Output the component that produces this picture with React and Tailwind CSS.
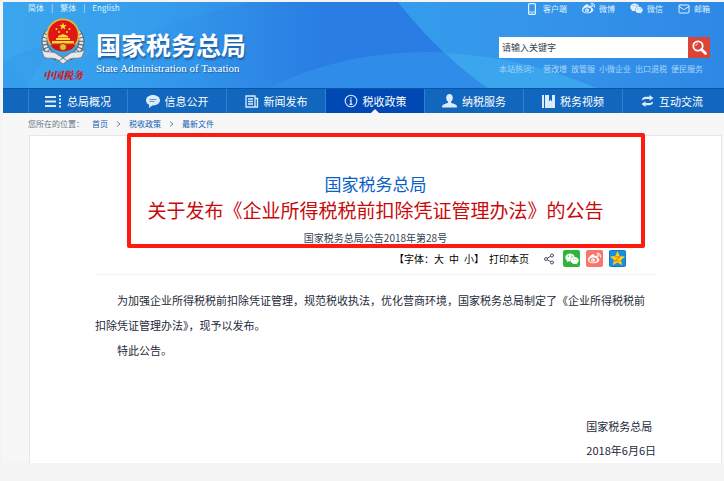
import React from 'react';
import { FaWeixin, FaWeibo } from 'react-icons/fa';
import { Share2, Mail } from 'lucide-react';

const MenuIcon = () => (
  <svg width="17" height="13" viewBox="0 0 17 13" fill="currentColor" aria-hidden="true">
    <path d="M0 1h11v2H0zM0 5.500h11v2H0zM0 10h11v2H0z" />
    <path d="M14 0h2v2h-2zM14 3.500h2v2h-2zM14 7h2v2h-2zM14 10.500h2v2h-2z" />
  </svg>
);

const ChatIcon = () => (
  <svg width="14" height="13" viewBox="0 0 14 13" aria-hidden="true">
    <path d="M7 0C3 0 0 2.300 0 5.300c0 2 1.200 3.600 3.200 4.500L3 13l3.400-2.500H7c4 0 7-2.300 7-5.200S11 0 7 0z" fill="currentColor" />
    <path d="M3.500 4.500h7M3.500 6.500h5" stroke="#5b97d3" />
  </svg>
);

const NewsIcon = () => (
  <svg width="14" height="13" viewBox="0 0 14 13" fill="none" stroke="currentColor" strokeWidth="1.300" aria-hidden="true">
    <path d="M1 1h9v11H1zM10 3.500h2.500V12H10" />
    <path d="M3 4h5M3 6.500h5M3 9h5" />
  </svg>
);

const InfoIcon = () => (
  <svg width="14" height="14" viewBox="0 0 14 14" fill="none" stroke="currentColor" aria-hidden="true">
    <circle cx="7" cy="7" r="5.800" strokeWidth="1.100" />
    <path d="M7 3.200v1.600M5.800 6.200H7v4M5.500 10.300h3" strokeWidth="1.300" />
  </svg>
);

const PersonIcon = () => (
  <svg width="15" height="14" viewBox="0 0 15 14" fill="currentColor" aria-hidden="true">
    <path d="M7.500 0C5.500 0 4.200 1.500 4.200 3.700c0 1.800.8 3.300 1.800 4.100v1L1.500 10.600C.5 11.100 0 12 0 13.500h15c0-1.500-.5-2.400-1.500-2.900L9 8.800v-1c1-.8 1.800-2.300 1.800-4.100C10.800 1.500 9.500 0 7.500 0z" />
  </svg>
);

const BookIcon = () => (
  <svg width="13" height="13" viewBox="0 0 13 13" fill="currentColor" aria-hidden="true">
    <path d="M0 0h2v13H0zM3 0h4v6.500l1.500-1.700L10 6.500V0h3v13H3z" />
  </svg>
);

const SwapIcon = () => (
  <svg width="13" height="12" viewBox="0 0 13 12" fill="currentColor" aria-hidden="true">
    <path d="M.8 5.500C.8 3 2.500 1.800 5 1.800h3.500V0L12.500 3 8.500 5.800V4H5.200C3.500 4 2.800 4.500.8 5.500z" />
    <path d="M12.200 6.500c0 2.500-1.700 3.700-4.200 3.700H4.500V12L.5 9l4-2.800V8h3.300c1.700 0 2.400-.5 4.400-1.500z" />
  </svg>
);

const PhoneIcon = () => (
  <svg width="8" height="12" viewBox="0 0 8 12" fill="none" stroke="currentColor" className="mr-[3px]" aria-hidden="true">
    <rect x=".6" y=".6" width="6.800" height="10.800" rx="1" strokeWidth="1.200" />
    <path d="M1 9h6M3.300 10.300h1.400" strokeWidth=".8" />
  </svg>
);

const SearchIcon = () => (
  <svg width="15" height="15" viewBox="0 0 15 15" fill="none" stroke="currentColor" aria-hidden="true">
    <circle cx="6" cy="6" r="4.700" strokeWidth="1.800" />
    <path d="M9.500 9.500l4 4" strokeWidth="2.800" strokeLinecap="round" />
    <path d="M3.800 5.800c.1-1.200 1-2 2.200-2.100" strokeWidth=".9" />
  </svg>
);

const StarIcon = () => (
  <svg width="17" height="17" viewBox="0 0 17 17" aria-hidden="true">
    <rect x=".5" y=".5" width="16" height="16" rx="1" fill="#1890e0" stroke="#1678c0" />
    <path d="M8.500 1l2.200 4.900 5.300.5-4 3.500 1.200 5.400-4.700-2.800-4.700 2.800L5 9.900 1 6.400l5.300-.5z" fill="#ffce1b" />
    <path d="M5.500 6.700h5.300L6 11h5.600" fill="none" stroke="#e18a06" strokeWidth="1.100" />
  </svg>
);

const Emblem = () => (
  <svg width="46" height="47" viewBox="0 0 46 47" className="block" aria-hidden="true">
    <g fill="none" stroke="#59636b" strokeWidth="6">
      <path d="M8 14C1 23 5 34 17 40M38 14c7 9 3 20-9 26" />
    </g>
    <g fill="none" stroke="#dfe4e6" strokeWidth="4" strokeDasharray="2.500 1">
      <path d="M8 14C1 23 5 34 17 40M38 14c7 9 3 20-9 26" />
    </g>
    <circle cx="23" cy="17" r="16.500" fill="#e6b93c" />
    <circle cx="23" cy="17" r="14.800" fill="#e01814" />
    <path d="M23 4.500l1 2.600h2.800l-2.200 1.700.8 2.700-2.400-1.600-2.400 1.600.8-2.700-2.200-1.700H22z" fill="#ffd83a" />
    <g fill="#ffd83a">
      <circle cx="16.500" cy="11" r="1" />
      <circle cx="29.500" cy="11" r="1" />
      <circle cx="19" cy="14" r="1" />
      <circle cx="27" cy="14" r="1" />
      <path d="M18 18l5-2 5 2v1.500H18zM16 20h14v2H16zM12 23h22v2.500H12z" />
    </g>
    <path d="M10 26.500c7 2.500 19 2.500 26 0-3 5-8 7-13 7s-10-2-13-7z" fill="#c51912" />
    <circle cx="23" cy="29" r="3.500" fill="#e9bd3c" stroke="#a8350f" />
    <path d="M1 31c4 5 11 1 16 5l6 3 6-3c5-4 12 0 16-5l-3 8c-5 3-10-1-15 4l-4 3-4-3c-5-5-10-1-15-4z" fill="#e5e8ea" stroke="#69737a" strokeWidth=".8" />
    <path d="M17 36l12 8M29 36l-12 8" stroke="#737c82" strokeWidth="1" />
  </svg>
);

const languages = ['简体', '繁体', 'English'];

const channels = [
  { label: '客户端', icon: <PhoneIcon /> },
  { label: '微博', icon: <FaWeibo size={13} /> },
  { label: '微信', icon: <FaWeixin size={13} /> },
  { label: '邮箱', icon: <Mail size={12} /> },
];

const hotWords = ['营改增', '放管服', '小微企业', '出口退税', '便民服务'];

const navItems = [
  { label: '总局概况', icon: <MenuIcon /> },
  { label: '信息公开', icon: <ChatIcon /> },
  { label: '新闻发布', icon: <NewsIcon /> },
  { label: '税收政策', icon: <InfoIcon />, active: true },
  { label: '纳税服务', icon: <PersonIcon /> },
  { label: '税务视频', icon: <BookIcon /> },
  { label: '互动交流', icon: <SwapIcon /> },
];

const crumbs = ['首页', '税收政策', '最新文件'];

const HeaderBackdrop = () => (
  <svg className="absolute inset-0 h-full w-full" viewBox="0 0 721 86" preserveAspectRatio="none" aria-hidden="true">
    <defs>
      <linearGradient id="sky" x1="0" y1="0" x2="1" y2="0">
        <stop offset="0" stopColor="#3aa5ee" />
        <stop offset=".2" stopColor="#349bec" />
        <stop offset=".45" stopColor="#297de3" />
        <stop offset="1" stopColor="#297de3" />
      </linearGradient>
      <linearGradient id="wing" x1="0" y1="0" x2="1" y2="0">
        <stop offset="0" stopColor="#349cec" />
        <stop offset=".4" stopColor="#3595ea" />
        <stop offset="1" stopColor="#2e88e6" />
      </linearGradient>
    </defs>
    <path d="M0 0h721v86H0z" fill="url(#sky)" />
    <path d="M0 86V59C16 51 36 44 60 41 42 55 30 70 24 86z" fill="#2e93e8" opacity=".35" />
    <path d="M26 86C70 56 145 24 250 0H0v60z" fill="#44aff2" opacity=".15" />
    <path d="M264 86c60-28 110-36 165-36 55 0 110 10 165 36z" fill="#2f8de9" />
    <path d="M395 0c22 28 48 56 89 86h237V0z" fill="url(#wing)" />
    <path d="M443 51c45 2 100 13 150 35H485c-16-11-30-22-42-35z" fill="#3ba5ed" />
  </svg>
);

const Header = () => (
  <header className="relative">
    <HeaderBackdrop />
    <div className="relative flex justify-between pr-[14px] pl-[25px] text-[8px] leading-3 text-sky-100">
      <div className="pb-[5px]">
        <div className="flex gap-[7px]">
          {languages.map((name, i) => (
            <React.Fragment key={name}>
              {i > 0 && <span>|</span>}
              <a href="#">{name}</a>
            </React.Fragment>
          ))}
        </div>
        <div className="mt-1 flex gap-[10px] pl-3">
          <div className="flex flex-col items-center gap-[2px]">
            <Emblem />
            <span className="font-['Noto_Serif_CJK_SC','Noto_Sans_CJK_SC',serif] text-[10px] leading-4 font-black text-[#d3141b] italic">中国税务</span>
          </div>
          <div className="pt-2">
            <h1 className="text-[25px] leading-9 font-bold text-white [text-shadow:1px_2px_2px_#1b5d9f]">国家税务总局</h1>
            <p className="font-['Liberation_Serif',serif] text-[11px] leading-3 text-white [text-shadow:1px_1px_1px_#1b5d9f]">State Administration of Taxation</p>
          </div>
        </div>
      </div>

      <div className="w-[211px]">
        <div className="flex justify-end gap-[15px]">
          {channels.map((c) => (
            <a key={c.label} href="#" className="flex items-center gap-1">
              {c.icon}
              {c.label}
            </a>
          ))}
        </div>
        <form className="mt-[22px] flex h-[21px]">
          <input type="text" aria-label="请输入关键字" placeholder="请输入关键字" className="min-w-0 flex-1 bg-white px-[3px] text-[9px] text-gray-800 placeholder:text-gray-700" />
          <button type="button" aria-label="搜索" className="flex w-[22px] items-center justify-center bg-[#dc4438] text-white">
            <SearchIcon />
          </button>
        </form>
        <div className="mt-[5px] flex gap-1 whitespace-nowrap text-[#a9d6fa]">
          <span>本站热词&#xFF1A;</span>
          {hotWords.map((word) => (
            <a key={word} href="#">{word}</a>
          ))}
        </div>
      </div>
    </div>
  </header>
);

const Nav = () => (
  <nav className="flex border-t border-[#0c55a5] bg-[#1166bd] pr-[3px] pl-[25px] text-[11px] text-white">
    {navItems.map((item) => (
      <a
        key={item.label}
        href="#"
        className={`relative flex h-6 flex-1 items-center justify-center gap-[5px] border-l border-[#2f80ce] whitespace-nowrap ${item.active ? 'bg-[#0049b4]' : ''}`}
      >
        <span className="text-[#dcebfa]">{item.icon}</span>
        {item.label}
        {item.active && (
          <svg width="8" height="4" viewBox="0 0 8 4" className="absolute bottom-0 left-1/2 -translate-x-1/2" aria-hidden="true">
            <path d="M4 0l4 4H0z" fill="#f7f7f7" />
          </svg>
        )}
      </a>
    ))}
  </nav>
);

const Breadcrumb = () => (
  <div className="flex items-center gap-2 py-[5px] pl-[25px] text-[8px] leading-3 text-gray-500">
    <span>您所在的位置&#xFF1A;</span>
    {crumbs.map((name, i) => (
      <React.Fragment key={name}>
        {i > 0 && (
          <svg width="5" height="6" viewBox="0 0 5 6" fill="none" stroke="#5d87b8" aria-hidden="true">
            <path d="M1 .5L4 3 1 5.500" />
          </svg>
        )}
        <a href="#" className="text-[#1260b0]">{name}</a>
      </React.Fragment>
    ))}
  </div>
);

const Toolbar = () => (
  <div className="flex items-center justify-end gap-[6px] border-b border-gray-100 pr-[30px] pb-[7px] text-[10px] leading-4 text-black">
    <div className="mr-2 flex gap-[5px]">
      <span>【字体&#xFF1A;<button type="button">大</button></span>
      <button type="button">中</button>
      <span><button type="button">小</button>】</span>
      <button type="button">打印本页</button>
    </div>
    <button type="button" aria-label="分享" className="mr-[2px] text-gray-600">
      <Share2 size={12} />
    </button>
    <button type="button" aria-label="分享到微信" className="flex size-[17px] items-center justify-center rounded-xs bg-[#2fb53a] text-white">
      <FaWeixin size={14} />
    </button>
    <button type="button" aria-label="分享到微博" className="flex size-[17px] items-center justify-center rounded-xs bg-[#f87569] text-white">
      <FaWeibo size={13} />
    </button>
    <button type="button" aria-label="分享到QQ空间">
      <StarIcon />
    </button>
  </div>
);

const Article = () => (
  <article className="relative mr-[2px] ml-[26px] border border-b-0 border-gray-200 bg-white px-[65px] pt-9">
    <div className="text-center">
      <p className="text-[17px] leading-6 text-[#0b5fc4]">国家税务总局</p>
      <h2 className="text-[19px] leading-7 whitespace-nowrap text-[#c80a0a]">关于发布《企业所得税税前扣除凭证管理办法》的公告</h2>
      <p className="mt-1 text-[10px] leading-5 text-gray-700">国家税务总局公告2018年第28号</p>
    </div>
    <div className="absolute -top-[3px] right-[11%] left-[14%] h-[115px] rounded-xs border-4 border-[#ff1a10]" />
    <div className="pt-[2px]">
      <Toolbar />
    </div>
    <div className="pt-[13px] pr-1 text-[11px] leading-[25px] text-gray-800">
      <p className="indent-[22px]">
        为加强企业所得税税前扣除凭证管理&#xFF0C;规范税收执法&#xFF0C;优化营商环境&#xFF0C;国家税务总局制定了《企业所得税税前扣除凭证管理办法》&#xFF0C;现予以发布。
      </p>
      <p className="indent-[22px]">特此公告。</p>
    </div>
    <div className="mt-[51px] flex justify-end pb-px text-[11px] leading-6 text-gray-800">
      <div>
        <p>国家税务总局</p>
        <p>2018年6月6日</p>
      </div>
    </div>
  </article>
);

const App = () => {
  return (
    <div lang="zh-CN" className="min-h-screen bg-[#f4f4f4] pt-[2px] pl-[3px] font-['Noto_Sans_CJK_SC',sans-serif]">
      <div className="bg-[#f7f7f7]">
        <Header />
        <Nav />
        <Breadcrumb />
        <Article />
      </div>
    </div>
  );
};

export default App;
